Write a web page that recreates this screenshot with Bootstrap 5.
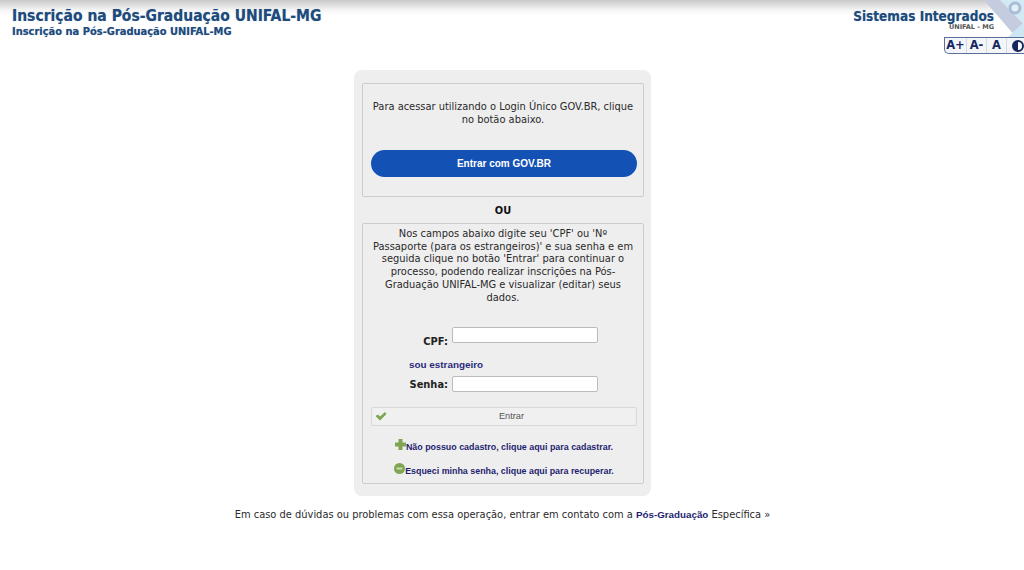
<!DOCTYPE html>
<html lang="pt-BR">
<head>
  <meta charset="UTF-8" />
  <meta name="viewport" content="width=device-width, initial-scale=1" />
  <title>Inscrição na Pós-Graduação UNIFAL-MG</title>
  <link href="https://cdn.jsdelivr.net/npm/bootstrap@5.3.0/dist/css/bootstrap.min.css" rel="stylesheet" />
  <style>
    body { font-family: "DejaVu Sans", Verdana, sans-serif; font-size: 9.9px; line-height: 12.7px; color: #2a2a2a; background: #fff; }
    .topo { height: 54px; padding: 8px 0 0 12px; background: linear-gradient(#c9c9c9 0, #f4f4f4 10px, #fff 15px); overflow: hidden; position: relative; }
    .topo-titulo { font-family: "DejaVu Sans Condensed", "DejaVu Sans", sans-serif; font-size: 15.5px; line-height: 17px; font-weight: 700; color: #1e4a7c; margin: 0; text-shadow: 0 0 1px #9fb4cc; }
    .topo-sub { font-family: "DejaVu Sans Condensed", "DejaVu Sans", sans-serif; font-size: 11px; line-height: 13px; font-weight: 700; color: #1e4a7c; margin: 0; text-shadow: 0 0 1px #9fb4cc; }
    .topo-dir { width: 180px; text-align: right; padding-right: 30px; position: relative; white-space: nowrap; }
    .sistemas { font-family: "DejaVu Sans Condensed", "DejaVu Sans", sans-serif; font-size: 13.5px; line-height: 16px; font-weight: 700; color: #1e4a7c; text-shadow: 0 0 1px #9fb4cc; }
    .unifal { font-size: 6.5px; line-height: 7px; font-weight: 700; color: #555; }
    .canto { position: absolute; top: 0; right: 0; }
    .fonte-bar { position: absolute; top: 37px; right: 0; width: 80px; height: 17px; border: 1px solid #5a6f9a; border-right: 0; border-radius: 0 0 0 5px; background: #f3f5f9; font-size: 11.5px; font-weight: 700; color: #14275f; line-height: 15px; }
    .fonte-bar span { border-right: 1px solid #d5dae6; width: 20px; text-align: center; white-space: nowrap; }
    .fonte-bar span:first-child { width: 22px; }
    .fonte-bar span:last-child { border: 0; width: 17px; padding-left: 4px; }
    .conteudo { width: 1005px; }
    .painel { width: 297px; height: 426px; margin: 16px auto 0; padding: 13px 7px 12px 8px; background: #eee; border-radius: 8px; }
    .caixa { border: 1px solid #ccc; border-radius: 2px; padding: 0 6px 0 8px; text-align: center; }
    .caixa-gov { height: 114px; padding-top: 17px; }
    .caixa-form { height: 261px; padding-top: 4px; }
    .aviso { padding: 0 3px 0 1px; }
    .btn-gov { display: block; width: 100%; height: 27px; margin-top: 24px; padding: 0; border: 0; border-radius: 14px; background: #1351b4; color: #fff; font-family: "Liberation Sans", Arial, sans-serif; font-size: 10px; font-weight: 700; line-height: 27px; }
    .ou { height: 26px; line-height: 28px; text-align: center; font-weight: 700; color: #111; }
    .rotulo { font-weight: 700; color: #222; width: 81px; text-align: right; padding-right: 4px; }
    .rotulo-cpf { padding-top: 9px; }
    .rotulo-senha { padding-top: 3px; }
    .campo { width: 146px; height: 16px; border: 1px solid #bbb; border-radius: 2px; background: #fff; padding: 0; }
    .linha-cpf { margin-top: 23px; height: 19px; }
    .estrangeiro { display: block; margin: 13px 0 0 38px; text-align: left; font-family: "Liberation Sans", Arial, sans-serif; font-size: 9.9px; font-weight: 700; color: #2b2b7a; text-decoration: none; }
    .linha-senha { margin-top: 4px; height: 16px; }
    .btn-entrar { display: block; position: relative; width: 100%; height: 19px; margin-top: 15px; padding: 0 0 0 15px; border: 1px solid #d8d8d8; border-radius: 2px; background: #f0f0f0; color: #555; font-family: "Liberation Sans", Arial, sans-serif; font-size: 9.2px; line-height: 17px; }
    .btn-entrar svg { position: absolute; left: 3px; top: 3px; }
    .acao { display: flex; justify-content: center; align-items: center; font-family: "Liberation Sans", Arial, sans-serif; font-size: 8.9px; font-weight: 700; color: #1f1f70; text-decoration: none; height: 14px; }
    .acao-1 { margin-top: 14px; }
    .acao-2 { margin-top: 10px; }
    .acao svg { margin-top: -4px; }
    .rodape { margin-top: 13px; text-align: center; font-size: 9.9px; color: #2a2a2a; }
    .rodape a { color: #1f1f70; font-family: "Liberation Sans", Arial, sans-serif; font-size: 9.8px; font-weight: 700; text-decoration: none; }
  </style>
</head>
<body>

<!-- cabecalho -->
<header class="topo d-flex justify-content-between">
  <div>
    <h1 class="topo-titulo">Inscrição na Pós-Graduação UNIFAL-MG</h1>
    <h2 class="topo-sub">Inscrição na Pós-Graduação UNIFAL-MG</h2>
  </div>
  <svg class="canto" width="44" height="37" viewBox="0 0 44 37">
    <path d="M4 0H20L44 24V37H36Z" fill="#c5cce0" />
    <path d="M20 0H44V24Z" fill="#d3e9f4" />
    <path d="M28 37L44 22V37Z" fill="#cde6f3" />
    <circle cx="35" cy="8" r="5" fill="#e2f1f8" stroke="#a9bcd8" stroke-width="3" />
  </svg>
  <div class="topo-dir">
    <div class="sistemas">Sistemas Integrados</div>
    <div class="unifal">UNIFAL - MG</div>
  </div>
  <div class="fonte-bar d-flex">
    <span>A+</span><span>A-</span><span>A</span><span><svg width="12" height="12" viewBox="0 0 12 12"><circle cx="6" cy="6" r="5" fill="#fff" stroke="#14275f" stroke-width="2" /><path d="M6 1A5 5 0 0 0 6 11Z" fill="#14275f" /></svg></span>
  </div>
</header>

<div class="conteudo">
<main class="painel">
  <div class="caixa caixa-gov">
    <div class="aviso">Para acessar utilizando o Login Único GOV.BR, clique no botão abaixo.</div>
    <button type="button" class="btn-gov">Entrar com GOV.BR</button>
  </div>
  <div class="ou">OU</div>
  <form class="caixa caixa-form">
    <div class="aviso">Nos campos abaixo digite seu 'CPF' ou 'Nº Passaporte (para os estrangeiros)' e sua senha e em seguida clique no botão 'Entrar' para continuar o processo, podendo realizar inscrições na Pós-Graduação UNIFAL-MG e visualizar (editar) seus dados.</div>
    <div class="linha-cpf d-flex">
      <label class="rotulo rotulo-cpf" for="cpf">CPF:</label>
      <input class="campo" id="cpf" type="text" />
    </div>
    <a class="estrangeiro" href="#">sou estrangeiro</a>
    <div class="linha-senha d-flex">
      <label class="rotulo rotulo-senha" for="senha">Senha:</label>
      <input class="campo" id="senha" type="password" />
    </div>
    <button type="button" class="btn-entrar">
      <svg width="12" height="11" viewBox="0 0 12 11"><path d="M0.500 5 3 3.500 5 5.500 10 1 11.500 3 5 9.500Z" fill="#7fa552" /></svg>
      Entrar
    </button>
    <a class="acao acao-1" href="#">
      <svg width="11" height="11" viewBox="0 0 11 11"><path d="M3.500 0H7.500V3.500H11V7.500H7.500V11H3.500V7.500H0V3.500H3.500Z" fill="#7fa552" /></svg>Não possuo cadastro, clique aqui para cadastrar.
    </a>
    <a class="acao acao-2" href="#">
      <svg width="11" height="11" viewBox="0 0 11 11"><circle cx="5.500" cy="5.500" r="5.500" fill="#7fa552" /><path d="M2.500 4.500H8.500V6.500H2.500Z" fill="#c8dcae" /></svg>Esqueci minha senha, clique aqui para recuperar.
    </a>
  </form>
</main>

<p class="rodape">Em caso de dúvidas ou problemas com essa operação, entrar em contato com a <a href="#">Pós-Graduação</a> Específica »</p>
</div>

<script src="https://cdn.jsdelivr.net/npm/bootstrap@5.3.0/dist/js/bootstrap.bundle.min.js"></script>
</body>
</html>
